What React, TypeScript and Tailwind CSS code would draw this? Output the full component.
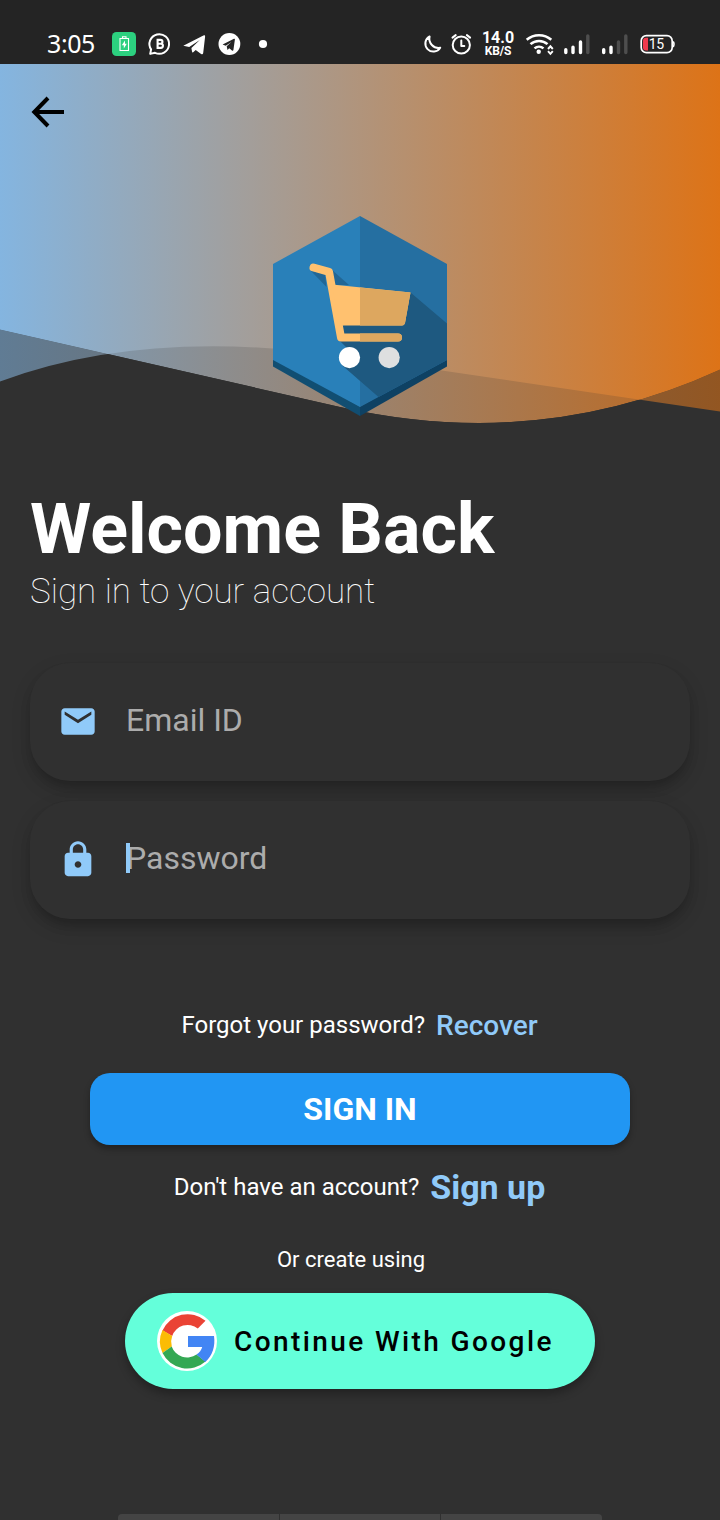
import React from 'react';
import { MdEmail, MdLock } from 'react-icons/md';

function StatusBar() {
  return (
    <div className="flex h-16 w-full shrink-0 items-end bg-[#242424] text-white">
      <div className="flex h-10 w-full items-center pl-[46px] pr-[45px]">
        <span className="w-[66px] pb-0.5 pl-px font-['Noto_Sans',sans-serif] text-[25px] leading-[38px] tracking-[-0.4px]">3:05</span>
        <svg className="h-10 w-[164px] shrink-0" viewBox="112 24 164 40" fill="none">
          <rect x="112" y="32" width="24" height="24" rx="4.5" fill="#2cd07f" />
          <path d="M120 38.500h8.500v12h-8.500zM122.500 38v-1.200h3.500V38" stroke="#fff" strokeWidth="1.1" />
          <path d="M125 40.500l-3.200 4.800h2v3.200l3-4.800h-1.800z" fill="#fff" />
          <g transform="translate(0.8 0)">
            <path d="M149.400 53.900l.9-4.500a9.800 9.800 0 1 1 3.900 3.400z" stroke="#fff" strokeWidth="2" strokeLinejoin="round" />
            <path d="M156.800 39.900h2.900a1.950 1.950 0 0 1 0 3.900h-2.900zM156.800 43.800h3.300a2.050 2.050 0 0 1 0 4.100h-3.300z" stroke="#fff" strokeWidth="2.1" />
          </g>
          <path d="M183.300 45.800 203.400 35.600q2-.9 1.700 1.200L203.200 53q-.4 2.100-2.100.9l-5.400-3.900-2.500 2.300q-.9.700-1.200-.7l-.6-3.500 8.400-8-10.600 7z" fill="#fff" />
          <circle cx="229.400" cy="44" r="10.900" fill="#fff" />
          <path d="M222.600 44.600 234 38.800q1-.3.9.7L233.400 50q-.4 1.100-1.400.4l-2.800-2.100-1.700 1.600-.8-3.600 4.700-4.400-5.700 3.800z" fill="#242424" />
          <circle cx="263" cy="44" r="4.100" fill="#fff" />
        </svg>
        <div className="flex-1" />
        <svg className="h-10 w-[54px] shrink-0" viewBox="422 24 54 40" fill="none" stroke="#fff" strokeWidth="2" strokeLinecap="round" strokeLinejoin="round">
          <path d="M429.600 36.500a8 8 0 1 0 10.600 11.200A9.200 9.200 0 0 1 429.600 36.500z" />
          <circle cx="461.300" cy="45" r="8.600" />
          <path d="M461.300 40.600V46h3M452.500 37.600l3.200-2.500M470.100 37.600l-3.200-2.500" />
        </svg>
        <div className="flex w-11 shrink-0 flex-col items-center text-center font-bold">
          <span className="text-[16px] leading-[14px]">14.0</span>
          <span className="text-[12px] leading-[12px] tracking-[-0.2px]">KB/S</span>
        </div>
        <svg className="h-10 w-[155px] shrink-0" viewBox="520 24 155 40" fill="none">
          <path d="M526.700 39.800a18.600 18.600 0 0 1 24.600 0M530.500 44.200a12.600 12.600 0 0 1 17 0M534.500 48.400a6.900 6.900 0 0 1 9 0" stroke="#fff" strokeWidth="2.5" />
          <circle cx="538.700" cy="51.800" r="2.200" fill="#fff" />
          <path d="M548 49l2.400-2.700 2.400 2.700M548 51.200l2.400 2.700 2.400-2.700" stroke="#fff" strokeWidth="1.900" />
          <g strokeWidth="3.4" strokeLinecap="round">
            <path d="M565.800 52.500v-2.800M573 52.500v-5.200M580.500 52.500V42" stroke="#fff" />
            <path d="M587.800 52.500V36" stroke="#4e4e4e" />
            <path d="M603.700 52.500v-2.800M611 52.500v-5.200" stroke="#fff" />
            <path d="M618.500 52.500V42M625.800 52.500V36" stroke="#4e4e4e" />
          </g>
          <rect x="641.200" y="35.700" width="31" height="17" rx="5.200" stroke="#fff" strokeWidth="1.700" />
          <path d="M673.200 41.500q1.600 2.500 0 5.500" stroke="#fff" strokeWidth="1.600" />
          <path d="M648 37.800v12.800h-2q-3-.2-3-3V40.800q0-2.800 3-3z" fill="#ee3a4d" />
          <text x="656.200" y="49" fill="#fff" fontSize="14" textAnchor="middle" letterSpacing="-0.3">15</text>
        </svg>
      </div>
    </div>
  );
}

const WAVE_A = 'M0 0V265.500L340 343Q540 388 720 305.500V0Z';
const WAVE_B = 'M0 0V317.500Q150 261.500 360 294.500L720 347.500V0Z';

function Header() {
  return (
    <header className="relative h-[360px] w-full shrink-0">
      <svg className="block h-[360px] w-[720px]" viewBox="0 0 720 360">
        <defs>
          <linearGradient id="sky" gradientUnits="userSpaceOnUse" x1="0" y1="0" x2="720" y2="0">
            <stop offset="0" stopColor="#84b5e0" />
            <stop offset="1" stopColor="#dd7317" />
          </linearGradient>
          <clipPath id="wave">
            <path d={WAVE_A} />
          </clipPath>
        </defs>
        <path d={WAVE_B} fill="url(#sky)" opacity="0.57" />
        <g clipPath="url(#wave)">
          <rect width="720" height="360" fill="#303030" />
          <path d={WAVE_A} fill="url(#sky)" opacity="0.83" />
          <path d={WAVE_B} fill="url(#sky)" />
        </g>
        <g transform="translate(0 -64)">
          <path d="M273 358 360 406.500V416L273 366.500Z" fill="#114e72" />
          <path d="M447 358 360 406.500V416L447 366.500Z" fill="#0e4163" />
          <path d="M360 216 273 264v96l87 47z" fill="#2980b9" />
          <path d="M360 216 447 264v96l-87 47z" fill="#256fa1" />
          <path d="M410.500 292.500 447 323.500V360L378.500 397 342.300 365.400 349 350 339 340 345 320z" fill="#1e5980" />
          <path d="M311 271 326.500 287 325 274zM331 269 349 285 334 285z" fill="#216796" />
          <path d="M313.500 267.500 329 271.800 341 337.500H398" fill="none" stroke="#ffc16f" strokeWidth="8" strokeLinecap="round" strokeLinejoin="round" />
          <path d="M332 284.500 410.500 292.500 405 323Q404.300 325.500 402 325.500H340z" fill="#ffc16f" />
          <path d="M360 287.400 410.500 292.500 405 323Q404.300 325.500 402 325.500H360zM360 333.500H398a4 4 0 0 1 0 8H360z" fill="#dda75f" />
          <circle cx="349.500" cy="357.600" r="10.600" fill="#fff" />
          <circle cx="389.200" cy="357.600" r="10.600" fill="#dedfe0" />
        </g>
      </svg>
      <button aria-label="Back" className="absolute left-6 top-6 text-black">
        <svg className="h-12 w-12" viewBox="0 0 48 48" fill="none" stroke="currentColor" strokeWidth="4">
          <path d="M40 24H11" />
          <path d="M24 10 10.300 24 24 38" strokeLinecap="butt" strokeLinejoin="miter" />
        </svg>
      </button>
    </header>
  );
}

function Field({ icon, label, active = false }: { icon: React.ReactNode; label: string; active?: boolean }) {
  return (
    <div className="flex h-[118px] w-full items-center rounded-[40px] bg-[#303030] pb-1 pl-7 shadow-[0_8px_12px_-2px_rgba(0,0,0,0.18),0_8px_20px_rgba(0,0,0,0.14)]">
      <span className="flex w-10 justify-center pt-[3px] text-[#90caf9]">{icon}</span>
      <span className="relative ml-7 text-[32px] leading-10 text-[#acacac]">
        {label}
        {active && <i className="absolute left-0 top-[5px] h-[30px] w-1 bg-[#90caf9]" />}
      </span>
    </div>
  );
}

function GoogleLogo() {
  return (
    <svg className="h-[60px] w-[60px] shrink-0" viewBox="0 0 60 60">
      <circle cx="30" cy="30" r="30" fill="#fff" />
      <path d="M5.500 19.500A27.500 27.500 0 0 1 48.500 9.800L40.800 17.500A16.300 16.300 0 0 0 15.200 25Z" fill="#ea4335" />
      <path d="M5.500 19A27.500 27.500 0 0 0 5.500 42L14.800 35.500A16.300 16.300 0 0 1 15.200 25Z" fill="#fbbc05" />
      <path d="M5.500 42A27.500 27.500 0 0 0 48.500 50.500L39.500 43.500A16.300 16.300 0 0 1 14.700 35.500Z" fill="#34a853" />
      <path d="M31 25H57C58.500 35 55.500 45 48.300 51L39.500 43.500Q44 40.500 45.200 36H31Z" fill="#4285f4" />
    </svg>
  );
}

export default function App() {
  return (
    <main className="flex h-[1520px] w-[720px] flex-col overflow-hidden bg-[#303030] font-['Roboto',sans-serif] text-white">
      <StatusBar />
      <Header />
      <section className="flex flex-col px-[30px] pt-16">
        <h1 className="text-[70px] font-bold leading-[82px]">Welcome Back</h1>
        <p className="pt-px text-[35px] font-thin leading-[42px]">Sign in to your account</p>
        <div className="mt-[50px] flex flex-col gap-5">
          <Field icon={<MdEmail size={41} />} label="Email ID" />
          <Field icon={<MdLock size={41} />} label="Password" active />
        </div>
      </section>
      <section className="flex flex-col items-center pt-[86px]">
        <div className="mr-px flex h-10 items-center gap-[11px]">
          <span className="text-[24px]">Forgot your password?</span>
          <a className="pt-0.5 text-[28px] font-medium text-[#90caf9]">Recover</a>
        </div>
        <button className="mt-7 h-[72px] w-[540px] rounded-[20px] bg-[#2196f3] text-[32px] font-bold shadow-[0_4px_6px_rgba(0,0,0,0.3)]">
          SIGN IN
        </button>
        <div className="mr-px mt-[22px] flex h-10 items-center gap-[11px]">
          <span className="text-[24px]">Don't have an account?</span>
          <a className="text-[34px] font-bold text-[#90caf9]">Sign up</a>
        </div>
        <p className="mr-[18px] mt-[39px] text-[22px] leading-7">Or create using</p>
        <button className="mt-[19px] flex h-24 w-[470px] items-center rounded-full bg-[#64ffda] pl-8 text-black shadow-[0_5px_10px_rgba(0,0,0,0.3)]">
          <GoogleLogo />
          <span className="ml-[17px] whitespace-nowrap pt-0.5 text-[28px] font-medium tracking-[2.4px]">Continue With Google</span>
        </button>
      </section>
      <div className="mt-auto flex h-1.5 w-[484px] gap-px self-center overflow-hidden rounded-t-sm">
        <div className="flex-1 bg-[#444]" />
        <div className="flex-1 bg-[#444]" />
        <div className="flex-1 bg-[#444]" />
      </div>
    </main>
  );
}
